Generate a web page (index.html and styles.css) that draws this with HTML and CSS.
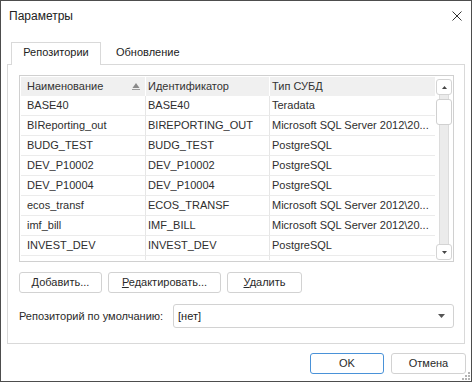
FILE: index.html
```html
<!DOCTYPE html>
<html lang="ru">
<head>
<meta charset="utf-8">
<title>Параметры</title>
<link rel="stylesheet" href="styles.css">
</head>
<body>
<div class="window">
  <div class="titlebar">
    <span class="title">Параметры</span>
    <svg class="close" width="10" height="10" viewBox="0 0 10 10"><path d="M0.5 0.5 L9.5 9.5 M9.5 0.5 L0.5 9.5" stroke="#333" stroke-width="1" fill="none"/></svg>
  </div>
  <div class="tabs">
    <div class="tab active">Репозитории</div>
    <div class="tab">Обновление</div>
  </div>
  <div class="panel">
    <div class="grid">
      <div class="table">
        <div class="row head">
          <div class="cell c1">Наименование<svg class="sort" width="8" height="7" viewBox="0 0 8 7"><path d="M4 0 L7.5 5 L0.5 5 Z" fill="#8a8a8a"/><rect x="0" y="6" width="8" height="1" fill="#9a9a9a"/></svg></div>
          <div class="cell">Идентификатор</div>
          <div class="cell">Тип СУБД</div>
        </div>
        <div class="row"><div class="cell c1">BASE40</div><div class="cell">BASE40</div><div class="cell">Teradata</div></div>
        <div class="row"><div class="cell c1">BIReporting_out</div><div class="cell">BIREPORTING_OUT</div><div class="cell">Microsoft SQL Server 2012\20...</div></div>
        <div class="row"><div class="cell c1">BUDG_TEST</div><div class="cell">BUDG_TEST</div><div class="cell">PostgreSQL</div></div>
        <div class="row"><div class="cell c1">DEV_P10002</div><div class="cell">DEV_P10002</div><div class="cell">PostgreSQL</div></div>
        <div class="row"><div class="cell c1">DEV_P10004</div><div class="cell">DEV_P10004</div><div class="cell">PostgreSQL</div></div>
        <div class="row"><div class="cell c1">ecos_transf</div><div class="cell">ECOS_TRANSF</div><div class="cell">Microsoft SQL Server 2012\20...</div></div>
        <div class="row"><div class="cell c1">imf_bill</div><div class="cell">IMF_BILL</div><div class="cell">Microsoft SQL Server 2012\20...</div></div>
        <div class="row"><div class="cell c1">INVEST_DEV</div><div class="cell">INVEST_DEV</div><div class="cell">PostgreSQL</div></div>
        <div class="row"><div class="cell c1"></div><div class="cell"></div><div class="cell"></div></div>
      </div>
      <div class="scrollbar">
        <div class="sbtn"><svg width="5" height="3" viewBox="0 0 5 3"><path d="M2.5 0 L5 3 L0 3 Z" fill="#444"/></svg></div>
        <div class="track">
          <div class="thumb"></div>
        </div>
        <div class="sbtn"><svg width="5" height="3" viewBox="0 0 5 3"><path d="M0 0 L5 0 L2.5 3 Z" fill="#444"/></svg></div>
      </div>
    </div>
    <div class="buttons">
      <div class="btn b-add"><u>Д</u>обавить...</div>
      <div class="btn b-edit"><u>Р</u>едактировать...</div>
      <div class="btn b-del"><u>У</u>далить</div>
    </div>
    <div class="default-row">
      <span class="label">Репозиторий по умолчанию:</span>
      <div class="combo">
        <span>[нет]</span>
        <svg width="7" height="4" viewBox="0 0 7 4"><path d="M0 0 L7 0 L3.5 4 Z" fill="#555"/></svg>
      </div>
    </div>
  </div>
  <div class="footer">
    <div class="btn b-ok">OK</div>
    <div class="btn b-cancel">Отмена</div>
  </div>
  <svg class="grip" width="11" height="11" viewBox="0 0 11 11">
    <rect x="8" y="2" width="2" height="2" fill="#b5b5b5"/>
    <rect x="5" y="5" width="2" height="2" fill="#b5b5b5"/>
    <rect x="8" y="5" width="2" height="2" fill="#b5b5b5"/>
    <rect x="2" y="8" width="2" height="2" fill="#b5b5b5"/>
    <rect x="5" y="8" width="2" height="2" fill="#b5b5b5"/>
    <rect x="8" y="8" width="2" height="2" fill="#b5b5b5"/>
  </svg>
</div>
</body>
</html>
```
FILE: styles.css
```css
html, body {
  margin: 0;
  padding: 0;
  background: #ffffff;
}
body {
  font-family: "Liberation Sans", Arial, sans-serif;
  font-size: 11px;
  color: #333333;
}
.window {
  position: relative;
  box-sizing: border-box;
  width: 472px;
  height: 382px;
  border: 1px solid #4d4d4d;
  background: #ffffff;
  overflow: hidden;
}
.titlebar {
  display: flex;
  align-items: center;
  justify-content: space-between;
  height: 31px;
  padding: 0 9px 0 8px;
}
.title {
  font-size: 12px;
  color: #222222;
  line-height: 31px;
}
.close {
  display: block;
  margin-top: -2px;
}
.tabs {
  display: flex;
  margin-top: 10px;
  padding-left: 10px;
  height: 22px;
}
.tab {
  position: relative;
  z-index: 1;
  box-sizing: border-box;
  height: 23px;
  line-height: 19px;
  padding: 1px 15px 3px 15px;
  color: #222222;
}
.tab.active {
  width: 90px;
  padding: 0;
  text-align: center;
  border: 1px solid #d9d9d9;
  border-bottom: none;
  background: #ffffff;
}
.panel {
  box-sizing: border-box;
  margin: 0 6px;
  height: 280px;
  border: 1px solid #d9d9d9;
  padding: 10px 10px 0 11px;
}
.grid {
  display: flex;
  box-sizing: border-box;
  height: 187px;
  border: 1px solid #d0d0d0;
  padding: 1px;
  overflow: hidden;
}
.table {
  width: 415px;
  overflow: hidden;
}
.row {
  display: grid;
  grid-template-columns: 125px 124px 166px;
  height: 20px;
}
.row .cell {
  box-sizing: border-box;
  height: 20px;
  line-height: 19px;
  padding-left: 2px;
  border-right: 1px solid #e6e6e6;
  border-bottom: 1px solid #ebebeb;
  white-space: nowrap;
  overflow: hidden;
  color: #2e2e2e;
}
.row .cell:last-child {
  border-right: none;
}
.row .cell.c1 {
  padding-left: 6px;
}
.row.head {
  height: 19px;
  background: #f0f0f0;
}
.row.head .cell {
  height: 19px;
  line-height: 19px;
  border-bottom: none;
  border-right: 1px solid #ffffff;
  color: #333333;
}
.row.head .cell.c1 {
  display: flex;
  justify-content: space-between;
  align-items: center;
  padding-right: 5px;
}
.sort {
  display: block;
  margin-top: -1px;
}
.scrollbar {
  display: flex;
  flex-direction: column;
  width: 16px;
  margin-left: 1px;
  padding-top: 2px;
}
.sbtn {
  box-sizing: border-box;
  width: 16px;
  height: 16px;
  border: 1px solid #d4d4d4;
  border-radius: 3px;
  background: #ffffff;
  display: flex;
  align-items: center;
  justify-content: center;
}
.track {
  flex: 1;
  position: relative;
  display: flex;
  justify-content: center;
  padding: 4px 0;
}
.track::before {
  content: "";
  position: absolute;
  top: 0;
  bottom: 0;
  left: 3px;
  width: 8px;
  background: #ebebeb;
  border-left: 1px solid #dcdcdc;
  border-right: 1px solid #dcdcdc;
}
.thumb {
  position: relative;
  box-sizing: border-box;
  width: 16px;
  height: 26px;
  border: 1px solid #d0d0d0;
  border-radius: 3px;
  background: #ffffff;
}
.buttons {
  display: flex;
  gap: 6px;
  margin-top: 10px;
}
.btn {
  box-sizing: border-box;
  height: 21px;
  line-height: 19px;
  text-align: center;
  border: 1px solid #d2d2d2;
  border-radius: 3px;
  background: #ffffff;
  color: #2a2a2a;
}
.b-add { width: 83px; }
.b-edit { width: 113px; }
.b-del { width: 75px; }
.default-row {
  display: flex;
  align-items: center;
  margin-top: 11px;
}
.label {
  width: 154px;
  flex: none;
  color: #2a2a2a;
}
.combo {
  flex: 1;
  box-sizing: border-box;
  height: 24px;
  border: 1px solid #d2d2d2;
  border-radius: 3px;
  display: flex;
  align-items: center;
  justify-content: space-between;
  padding: 0 8px 0 4px;
  color: #222222;
}
.combo svg {
  display: block;
}
.footer {
  display: flex;
  justify-content: flex-end;
  gap: 7px;
  margin-top: 9px;
  padding-right: 5px;
}
.b-ok {
  width: 74px;
  border-color: #4a92d8;
}
.b-cancel {
  width: 75px;
}
.grip {
  position: absolute;
  right: 0;
  bottom: 0;
}
```
